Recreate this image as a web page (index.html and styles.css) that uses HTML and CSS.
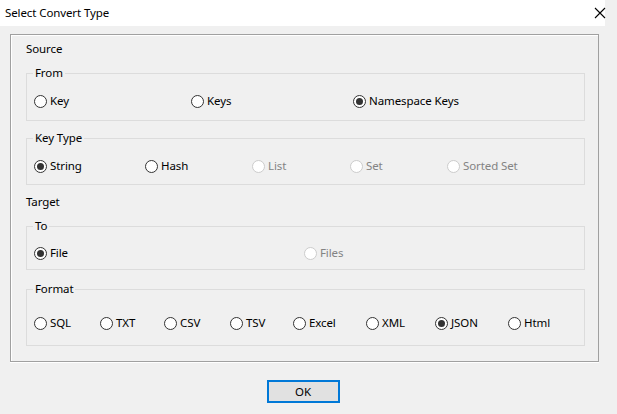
FILE: index.html
```html
<!DOCTYPE html>
<html>
<head>
<meta charset="utf-8">
<link rel="stylesheet" href="styles.css">
</head>
<body>
<div class="window">
  <div class="titlebar">
    <span class="title">Select Convert Type</span>
    <svg class="close" width="12" height="12" viewBox="0 0 12 12"><path d="M1 1 L11 11 M11 1 L1 11" stroke="#000" stroke-width="1.1" fill="none"/></svg>
  </div>
  <div class="content">
    <div class="panel">
      <div class="section-label">Source</div>
      <fieldset class="group g-from">
        <legend>From</legend>
        <div class="row cols-from">
          <label class="radio"><span class="dot"></span>Key</label>
          <label class="radio"><span class="dot"></span>Keys</label>
          <label class="radio checked"><span class="dot"></span>Namespace Keys</label>
        </div>
      </fieldset>
      <fieldset class="group g-keytype">
        <legend>Key Type</legend>
        <div class="row cols-keytype">
          <label class="radio checked"><span class="dot"></span>String</label>
          <label class="radio"><span class="dot"></span>Hash</label>
          <label class="radio disabled"><span class="dot"></span>List</label>
          <label class="radio disabled"><span class="dot"></span>Set</label>
          <label class="radio disabled"><span class="dot"></span>Sorted Set</label>
        </div>
      </fieldset>
      <div class="section-label target">Target</div>
      <fieldset class="group g-to">
        <legend>To</legend>
        <div class="row cols-to">
          <label class="radio checked"><span class="dot"></span>File</label>
          <label class="radio disabled"><span class="dot"></span>Files</label>
        </div>
      </fieldset>
      <fieldset class="group g-format">
        <legend>Format</legend>
        <div class="row cols-format">
          <label class="radio"><span class="dot"></span>SQL</label>
          <label class="radio"><span class="dot"></span>TXT</label>
          <label class="radio"><span class="dot"></span>CSV</label>
          <label class="radio"><span class="dot"></span>TSV</label>
          <label class="radio"><span class="dot"></span>Excel</label>
          <label class="radio"><span class="dot"></span>XML</label>
          <label class="radio checked"><span class="dot"></span>JSON</label>
          <label class="radio"><span class="dot"></span>Html</label>
        </div>
      </fieldset>
    </div>
    <div class="buttons">
      <button class="btn">OK</button>
    </div>
  </div>
</div>
</body>
</html>
```

FILE: styles.css
```css
html, body {
  margin: 0;
  padding: 0;
  background: #f0f0f0;
}
body {
  font-family: "Noto Sans", "Open Sans", sans-serif;
  font-size: 11.5px;
  letter-spacing: -0.1px;
  line-height: 16px;
  color: #000;
  width: 617px;
  height: 414px;
  overflow: hidden;
}
.window {
  width: 605px;
  height: 414px;
  background: #f0f0f0;
}
.titlebar {
  height: 26px;
  background: #fff;
  display: flex;
  align-items: center;
  justify-content: space-between;
  padding: 0 0 0 5px;
}
.title {
  margin-top: -1px;
}
.close {
  width: 12px;
  height: 12px;
  margin-right: -1px;
}
.content {
  padding: 8px 0 0 10px;
}
.panel {
  width: 589px;
  border: 1px solid #a0a0a0;
  box-shadow: inset 1px 1px 0 #fff, 0 1px 0 #fff;
  padding: 6px 13px 15px 15px;
  box-sizing: border-box;
  height: 328px;
}
.section-label {
  height: 16px;
}
.section-label.target {
  margin-top: 9px;
}
.group {
  margin: 8px 0 0 0;
  padding: 0 6px 0 7px;
  border: 1px solid #dcdcdc;
  min-width: 0;
}
.group legend {
  padding: 0 2px;
  margin-left: -1px;
  line-height: 16px;
}
.g-from { margin-top: 8px; }
.g-keytype { margin-top: 9px; }
.g-to { margin-top: 8px; }
.g-format { margin-top: 11px; }
.row {
  display: grid;
  align-items: center;
  height: 16px;
}
.g-from .row { margin: 12px 0 11px; }
.g-keytype .row { margin: 12px 0 10px; }
.g-to .row { margin: 11px 0 8px; }
.g-format .row { margin: 18px 0 14px; }
.cols-from { grid-template-columns: 157px 162px auto; }
.cols-keytype { grid-template-columns: 111px 107px 98px 97px auto; }
.cols-to { grid-template-columns: 270px auto; }
.cols-format { grid-template-columns: 66px 64px 66px 63px 73px 69px 73px auto; }
.radio {
  display: flex;
  align-items: center;
  white-space: nowrap;
}
.dot {
  width: 11px;
  height: 11px;
  border: 1px solid #333;
  border-radius: 50%;
  background: #fff;
  margin-right: 3px;
  position: relative;
  flex: none;
}
.radio.checked .dot::after {
  content: "";
  position: absolute;
  left: 2px;
  top: 2px;
  width: 7px;
  height: 7px;
  border-radius: 50%;
  background: #333;
}
.radio.disabled {
  color: #838383;
}
.radio.disabled .dot {
  border-color: #cccccc;
}
.buttons {
  display: flex;
  justify-content: center;
  padding: 18px 0 0 0;
  width: 589px;
}
.btn {
  width: 73px;
  height: 23px;
  border: 2px solid #0078d7;
  background: #e1e1e1;
  font-family: "Noto Sans", "Open Sans", sans-serif;
  font-size: 11.5px;
  letter-spacing: -0.1px;
  color: #000;
  padding: 0;
  margin-left: -3px;
}
```
